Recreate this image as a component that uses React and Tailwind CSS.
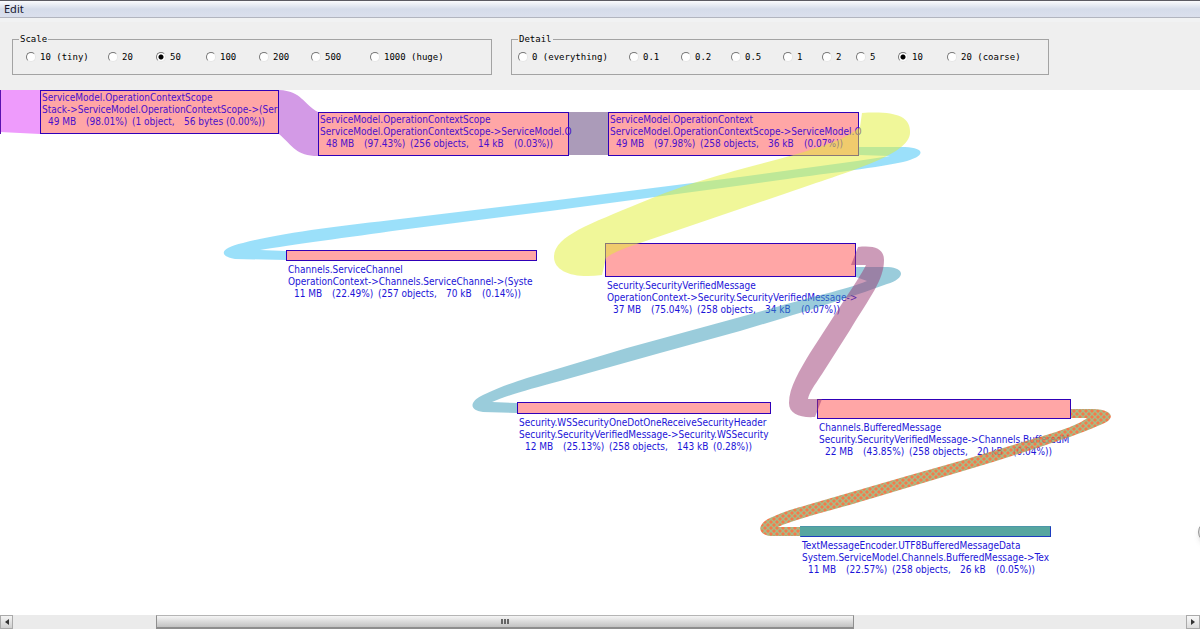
import React from 'react';

const scales = ['10 (tiny)', '20', '50', '100', '200', '500', '1000 (huge)'];
const details = ['0 (everything)', '0.1', '0.2', '0.5', '1', '2', '5', '10', '20 (coarse)'];

const insideNodes = [
  {
    box: 'left-[40px] top-0 w-[239px]',
    lines: ['ServiceModel.OperationContextScope', 'Stack->ServiceModel.OperationContextScope->(Ser'],
    stats: ['49 MB', '(98.01%)', '(1 object,', '56 bytes (0.00%))', ''],
  },
  {
    box: 'left-[318px] top-[22px] w-[251px]',
    lines: ['ServiceModel.OperationContextScope', 'ServiceModel.OperationContextScope->ServiceModel.O'],
    stats: ['48 MB', '(97.43%)', '(256 objects,', '14 kB', '(0.03%))'],
  },
  {
    box: 'left-[608px] top-[22px] w-[251px]',
    lines: ['ServiceModel.OperationContext', 'ServiceModel.OperationContextScope->ServiceModel.O'],
    stats: ['49 MB', '(97.98%)', '(258 objects,', '36 kB', '(0.07%))'],
  },
];

const belowNodes = [
  {
    pos: 'left-[286px] top-[160px] w-[251px]',
    bar: 'h-[11px] border-[#3000b8] bg-[#ffa6a6]',
    lines: ['Channels.ServiceChannel', 'OperationContext->Channels.ServiceChannel->(Syste'],
    stats: ['11 MB', '(22.49%)', '(257 objects,', '70 kB', '(0.14%))'],
  },
  {
    pos: 'left-[605px] top-[153px] w-[251px]',
    bar: 'h-[34px] border-[#3000b8] bg-[#ffa6a6]',
    lines: ['Security.SecurityVerifiedMessage', 'OperationContext->Security.SecurityVerifiedMessage->'],
    stats: ['37 MB', '(75.04%)', '(258 objects,', '34 kB', '(0.07%))'],
  },
  {
    pos: 'left-[517px] top-[312px] w-[254px]',
    bar: 'h-3 border-[#3000b8] bg-[#ffa6a6]',
    lines: ['Security.WSSecurityOneDotOneReceiveSecurityHeader', 'Security.SecurityVerifiedMessage->Security.WSSecurity'],
    stats: ['12 MB', '(25.13%)', '(258 objects,', '143 kB', '(0.28%))'],
  },
  {
    pos: 'left-[817px] top-[309px] w-[254px]',
    bar: 'h-5 border-[#3000b8] bg-[#ffa6a6]',
    lines: ['Channels.BufferedMessage', 'Security.SecurityVerifiedMessage->Channels.BufferedM'],
    stats: ['22 MB', '(43.85%)', '(258 objects,', '20 kB', '(0.04%))'],
  },
  {
    pos: 'left-[800px] top-[436px] w-[251px]',
    bar: 'h-[11px] border-b-[#1c3cc0] border-l-[#56a6a0] border-r-[#1c3cc0] border-t-[#4c96a8] bg-[#56a6a0]',
    lines: ['TextMessageEncoder.UTF8BufferedMessageData', 'System.ServiceModel.Channels.BufferedMessage->Tex'],
    stats: ['11 MB', '(22.57%)', '(258 objects,', '26 kB', '(0.05%))'],
  },
];

const RadioGroup = ({ title, name, options, checked, className, cols }) => {
  return (
    <fieldset className={`h-[42px] border border-[#a3a3a3] px-[6px] ${className}`}>
      <legend className="px-px text-[9px] leading-3">{title}</legend>
      <div className={`grid items-center pt-[6px] ${cols}`}>
        {options.map((option) => (
          <label key={option} className="flex items-center gap-1 whitespace-nowrap text-[9px] leading-3">
            <input
              type="radio"
              name={name}
              defaultChecked={option === checked}
              className="size-[10px] shrink-0 appearance-none rounded-full border border-b-[#e6e6e6] border-l-[#777] border-r-[#e6e6e6] border-t-[#777] bg-white checked:bg-[radial-gradient(circle,#000_0_2px,#fff_3px)]"
            />
            {option}
          </label>
        ))}
      </div>
    </fieldset>
  );
};

const NodeText = ({ lines, stats }) => {
  return (
    <div className="whitespace-pre pl-px pt-px text-[10px] leading-3">
      <p>{lines[0]}</p>
      <p>{lines[1]}</p>
      <p className="flex pl-[6px]">
        <span className="w-[38px]">{stats[0]}</span>
        <span className="w-[46px]">{stats[1]}</span>
        <span className={stats[4] ? 'w-[68px]' : 'w-[52px]'}>{stats[2]}</span>
        <span className={stats[4] ? 'w-9' : ''}>{stats[3]}</span>
        <span>{stats[4]}</span>
      </p>
    </div>
  );
};

const Ribbons = () => {
  return (
    <svg className="pointer-events-none absolute left-0 top-0" width="1200" height="525" viewBox="0 90 1200 525" aria-hidden="true">
      <defs>
        <pattern id="hatch" width="6" height="6" patternUnits="userSpaceOnUse">
          <rect width="6" height="6" fill="#f5602c" />
          <path d="M-1 -1L7 7M7 -1L-1 7" stroke="#98b070" strokeWidth="1.4" />
        </pattern>
      </defs>
      <path d="M0 90H40V134L0 132Z" fill="#ee9bfc" />
      <path d="M0.5 90V134" stroke="#5a10b0" />
      <path d="M279 90C302 91 303 104 318 112V156C296 156 293 146 279 134Z" fill="#d39ae6" />
      <g fillOpacity="0.5">
        <path
          d="M859 147H905C927 148 925 157 903 162C870 169 820 174 780 180L707 190L550 211L400 230C350 237 290 245 260 250L286 251V260L235 259C218 256 220 248 243 243C280 233 340 226 400 219L550 201L740 177L857 161L890 156L859 155Z"
          fill="#37c1f5"
        />
        <path
          d="M862 113C895 111 911 116 910 133C909 155 850 171 787 193L640 243C625 248 612 253 606 258L602 275C575 279 554 272 554 257C554 236 590 224 640 203C700 178 740 170 797 154C830 144 845 139 860 127Z"
          fill="#e1f034"
        />
        <path
          d="M856 267H888C905 268 906 278 887 284C860 294 823 306 777 320L740 331L660 353L560 381C530 389 505 396 492 402L517 403V413L483 412C468 410 470 401 483 395C500 387 515 382 527 378L627 348L733 319L773 308C810 297 845 290 867 281L856 277Z"
          fill="#3599b7"
        />
        <path
          d="M858 247C875 245 884 249 884 260C884 280 870 297 850 330L822 374C814 386 809 393 808 399H822L815 417C800 418 789 414 789 403C789 387 800 370 810 353L843 302C855 284 862 273 866 265H851Z"
          fill="#993771"
        />
      </g>
      <path
        d="M1071 409H1093C1116 410 1115 420 1100 425C1080 434 1060 440 1043 446L993 462L933 480L873 498C830 511 795 519 778 527H800V536H770C756 534 758 523 770 518C785 511 797 508 807 505L907 476L960 461L993 451L1043 436C1060 431 1080 424 1087 418H1071Z"
        fill="url(#hatch)"
        fillOpacity="0.85"
      />
    </svg>
  );
};

const App = () => {
  return (
    <div className="flex h-screen flex-col overflow-hidden bg-white font-['DejaVu_Sans_Condensed','DejaVu_Sans',sans-serif] text-black">
      <nav className="flex h-[18px] shrink-0 items-center border-b border-t border-b-[#b2b5bf] border-t-[#5b5b63] bg-linear-to-b from-[#fafbfd] from-0% via-[#d5dcea] via-50% to-[#dbe0ed] pl-1">
        <button type="button" className="font-['Noto_Sans',sans-serif] text-[11px] leading-4 text-[#14142c]">Edit</button>
      </nav>

      <header className="flex h-[72px] shrink-0 items-start gap-[19px] border-t-4 border-[#f1f2f3] bg-[#efefef] pl-3 pt-[11px] font-['DejaVu_Sans_Mono',monospace]">
        <RadioGroup
          title="Scale"
          name="scale"
          options={scales}
          checked="50"
          className="w-[480px]"
          cols="pl-[7px] grid-cols-[82px_48px_50px_53px_52px_59px_auto]"
        />
        <RadioGroup
          title="Detail"
          name="detail"
          options={details}
          checked="10"
          className="w-[538px]"
          cols="grid-cols-[111px_52px_50px_52px_39px_34px_42px_49px_auto]"
        />
      </header>

      <main className="relative min-h-0 flex-1 overflow-hidden">
        {/* grey link sits under the boxes so long labels stay readable */}
        <div className="absolute left-[569px] top-[22px] h-[43px] w-[39px] bg-[#ab9bb9]"></div>
        {insideNodes.map((node, i) => (
          <div key={i} className={`absolute h-11 border border-[#3000b8] bg-[#ffa6a6] text-[#4a10cc] ${node.box}`}>
            <NodeText lines={node.lines} stats={node.stats} />
          </div>
        ))}
        {belowNodes.map((node, i) => (
          <div key={i} className={`absolute text-[#1c14d8] ${node.pos}`}>
            <div className={`mb-[2px] border ${node.bar}`}></div>
            <div className="pl-px">
              <NodeText lines={node.lines} stats={node.stats} />
            </div>
          </div>
        ))}
        <Ribbons />
        <div className="absolute -right-[20px] top-[431px] size-[22px] rounded-full border border-[#999] bg-[#ddd] shadow-md"></div>
      </main>

      <footer className="flex h-[14px] shrink-0 bg-[#ebebeb]">
        <button type="button" aria-label="Scroll left" className="flex w-[13px] items-center justify-center border border-[#aaa] bg-linear-to-b from-[#f4f4f4] to-[#cfcfcf]">
          <svg width="4" height="6" viewBox="0 0 4 6"><path d="M4 0V6L0 3Z" fill="#333" /></svg>
        </button>
        <div className="flex-1">
          <div className="ml-[12.2%] flex h-full w-[59.5%] items-center justify-center gap-px border border-b-2 border-[#8e8e8e] border-t-[#b5b5b5] bg-linear-to-b from-[#f5f5f5] to-[#c2c2c2]">
            <span className="h-[5px] w-[2px] bg-[#666]"></span>
            <span className="h-[5px] w-[2px] bg-[#666]"></span>
            <span className="h-[5px] w-[2px] bg-[#666]"></span>
          </div>
        </div>
        <button type="button" aria-label="Scroll right" className="flex w-[14px] items-center justify-center border border-[#aaa] bg-linear-to-b from-[#f8f8f8] to-[#dcdcdc]">
          <svg width="4" height="6" viewBox="0 0 4 6"><path d="M0 0V6L4 3Z" fill="#333" /></svg>
        </button>
      </footer>
    </div>
  );
};

export default App;
